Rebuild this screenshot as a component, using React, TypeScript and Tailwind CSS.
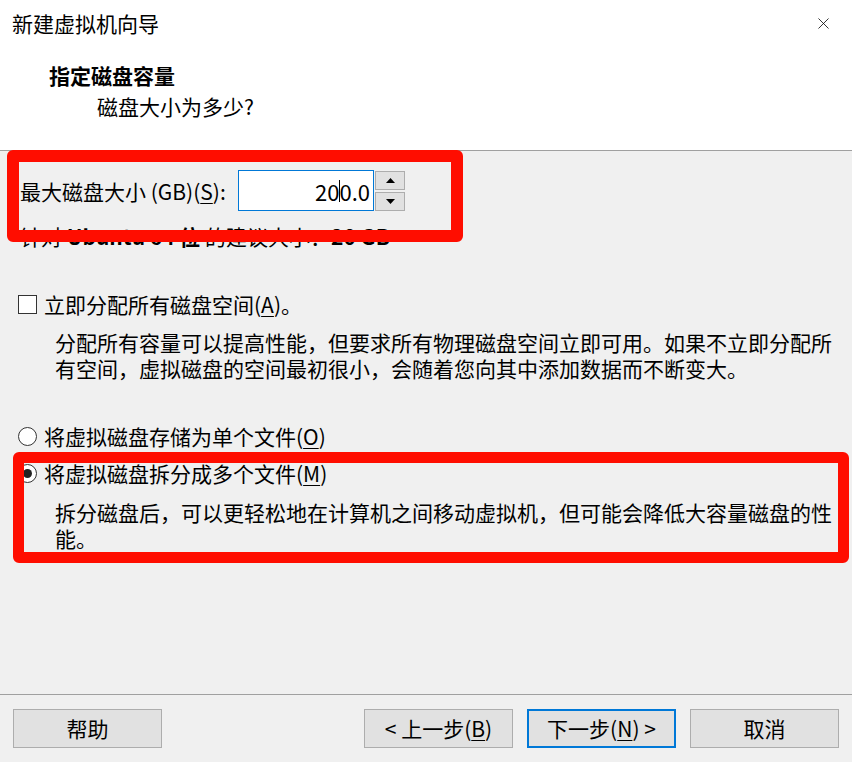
import { X } from 'lucide-react'

const font = { fontFamily: '"Noto Sans CJK SC", "Noto Sans", sans-serif' }

const Btn = ({ children, primary }: { children: React.ReactNode; primary?: boolean }) => (
  <button
    className={
      'w-[149px] h-[39px] flex items-center justify-center bg-[#e1e1e1] text-[21px] leading-none text-black ' +
      (primary ? 'border-2 border-[#0078d7]' : 'border border-[#adadad]')
    }
  >
    {children}
  </button>
)

const U = ({ children }: { children: React.ReactNode }) => (
  <span className="underline underline-offset-[3px] decoration-1">{children}</span>
)

export default function App() {
  return (
    <div className="relative w-[852px] h-[762px] bg-[#f0f0f0] flex flex-col text-black overflow-hidden" style={font}>
      {/* header */}
      <div className="h-[151px] bg-white border-b border-[#a0a0a0] shrink-0">
        <div className="h-[46px] flex items-center justify-between pl-[12px] pr-[19px]">
          <span className="text-[21px] leading-none">新建虚拟机向导</span>
          <X className="w-[19px] h-[19px]" strokeWidth={1} />
        </div>
        <div className="mt-[16px] pl-[49px] text-[21px] leading-[26px] font-bold">指定磁盘容量</div>
        <div className="mt-[5px] pl-[97px] text-[21px] leading-[26px]">磁盘大小为多少?</div>
      </div>

      {/* body */}
      <div className="flex-1 text-[21px] leading-[26px]">
        <div className="mt-[19px] pl-[20px] flex items-center h-[41px]">
          <span className="w-[218px] shrink-0">
            最大磁盘大小 (GB)(<U>S</U>):
          </span>
          <div className="w-[136px] h-[41px] bg-white border border-[#0078d7] flex items-center justify-end pr-[3px] text-[22px]">
            <span>20</span>
            <span className="inline-block w-px h-[22px] bg-black -mr-px" />
            <span>0.0</span>
          </div>
          <div className="ml-px flex flex-col gap-[2px] w-[30px]">
            <div className="h-[19px] bg-[#e1e1e1] border border-[#adadad] flex items-center justify-center">
              <svg width="9" height="5" viewBox="0 0 9 5"><path d="M0 5 L4.5 0 L9 5 Z" fill="#000" /></svg>
            </div>
            <div className="h-[19px] bg-[#e1e1e1] border border-[#adadad] flex items-center justify-center">
              <svg width="9" height="5" viewBox="0 0 9 5"><path d="M0 0 L9 0 L4.5 5 Z" fill="#000" /></svg>
            </div>
          </div>
        </div>

        <div className="mt-[12px] pl-[20px]">
          针对 <b>Ubuntu 64 位</b> 的建议大小：<b>20 GB</b>
        </div>

        <div className="mt-[42px] pl-[18px] flex items-center">
          <span className="w-[19px] h-[19px] border border-[#333] bg-white shrink-0" />
          <span className="ml-[7px]">
            立即分配所有磁盘空间(<U>A</U>)。
          </span>
        </div>
        <div className="mt-[12px] pl-[55px]">
          <div>分配所有容量可以提高性能，但要求所有物理磁盘空间立即可用。如果不立即分配所</div>
          <div>有空间，虚拟磁盘的空间最初很小，会随着您向其中添加数据而不断变大。</div>
        </div>

        <div className="mt-[42px] pl-[18px] flex items-center">
          <span className="w-[19px] h-[19px] rounded-full border border-[#333] bg-white shrink-0" />
          <span className="ml-[7px]">
            将虚拟磁盘存储为单个文件(<U>O</U>)
          </span>
        </div>
        <div className="mt-[11px] pl-[18px] flex items-center">
          <span className="w-[19px] h-[19px] rounded-full border border-[#333] bg-white shrink-0 flex items-center justify-center">
            <span className="w-[9px] h-[9px] rounded-full bg-[#222]" />
          </span>
          <span className="ml-[7px]">
            将虚拟磁盘拆分成多个文件(<U>M</U>)
          </span>
        </div>
        <div className="mt-[13px] pl-[55px]">
          <div>拆分磁盘后，可以更轻松地在计算机之间移动虚拟机，但可能会降低大容量磁盘的性</div>
          <div>能。</div>
        </div>
      </div>

      {/* footer */}
      <div className="h-[68px] shrink-0 border-t border-[#a0a0a0] pt-[14px] px-[13px] flex items-start justify-between">
        <Btn>帮助</Btn>
        <div className="flex gap-[14px]">
          <Btn>
            &lt; 上一步(<U>B</U>)
          </Btn>
          <Btn primary>
            下一步(<U>N</U>) &gt;
          </Btn>
          <Btn>取消</Btn>
        </div>
      </div>

      {/* red annotation boxes */}
      <div className="absolute left-[7px] top-[150px] w-[456px] h-[92px] border-[12px] border-[#ff0d00] rounded-[6px] pointer-events-none" />
      <div className="absolute left-[13px] top-[452px] w-[836px] h-[111px] border-[11px] border-[#ff0d00] rounded-[6px] pointer-events-none" />
    </div>
  )
}
